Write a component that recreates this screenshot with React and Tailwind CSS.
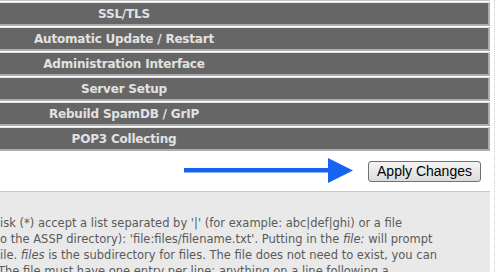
import React from 'react';

const sections = [
  'SSL/TLS',
  'Automatic Update / Restart',
  'Administration Interface',
  'Server Setup',
  'Rebuild SpamDB / GrIP',
  'POP3 Collecting',
];

function SectionBar({ title }) {
  return (
    <div className="mt-px w-[490px] border-t border-r-2 border-b-2 border-t-[#e4e4e4] border-r-[#adadad] border-b-[#adadad] bg-[#666666]">
      <div className="flex h-[21px] w-[248px] items-center justify-center whitespace-nowrap text-[12px] font-bold tracking-[-0.2px] text-[#e2e2e2]">
        {title}
      </div>
    </div>
  );
}

export default function App() {
  return (
    <div className="flex h-[272px] w-[496px] overflow-hidden bg-white font-['DejaVu_Sans',Verdana,sans-serif]">
      <div className="flex w-[494px] flex-col">
        <div className="h-px w-[490px] bg-[#c4c4c4]" />
        {sections.map((s) => (
          <SectionBar key={s} title={s} />
        ))}

        {/* apply row */}
        <div className="flex h-[40px] shrink-0 items-center pl-[184px]">
          <svg width="170" height="26" viewBox="0 0 170 26" className="shrink-0">
            <rect x="0" y="10" width="148" height="4.5" fill="#1763f2" />
            <polygon points="144,0 169,12.5 144,25" fill="#1763f2" />
          </svg>
          <button className="ml-[14px] h-[21px] w-[113px] rounded-[3px] border border-[#707070] bg-gradient-to-b from-[#f4f4f4] to-[#dcdcdc] font-['Liberation_Sans',Arial,sans-serif] text-[14px] leading-none text-black">
            Apply Changes
          </button>
        </div>

        {/* help box */}
        <div className="w-[490px] flex-1 overflow-hidden border-t border-[#c8c8c8] bg-[#e9e9e9] pt-[23px] text-[11.5px] leading-[16px] text-[#5a5a5a]">
          <div className="whitespace-nowrap">isk (*) accept a list separated by '|' (for example: abc|def|ghi) or a file</div>
          <div className="whitespace-nowrap">o the ASSP directory): 'file:files/filename.txt'. Putting in the <i>file:</i> will prompt</div>
          <div className="whitespace-nowrap">ile. <i>files</i> is the subdirectory for files. The file does not need to exist, you can</div>
          <div className="ml-[-2px] whitespace-nowrap">The file must have one entry per line; anything on a line following a</div>
        </div>
      </div>
      <div className="h-full w-px border-l border-dotted border-[#c8c8c8]" />
    </div>
  );
}
